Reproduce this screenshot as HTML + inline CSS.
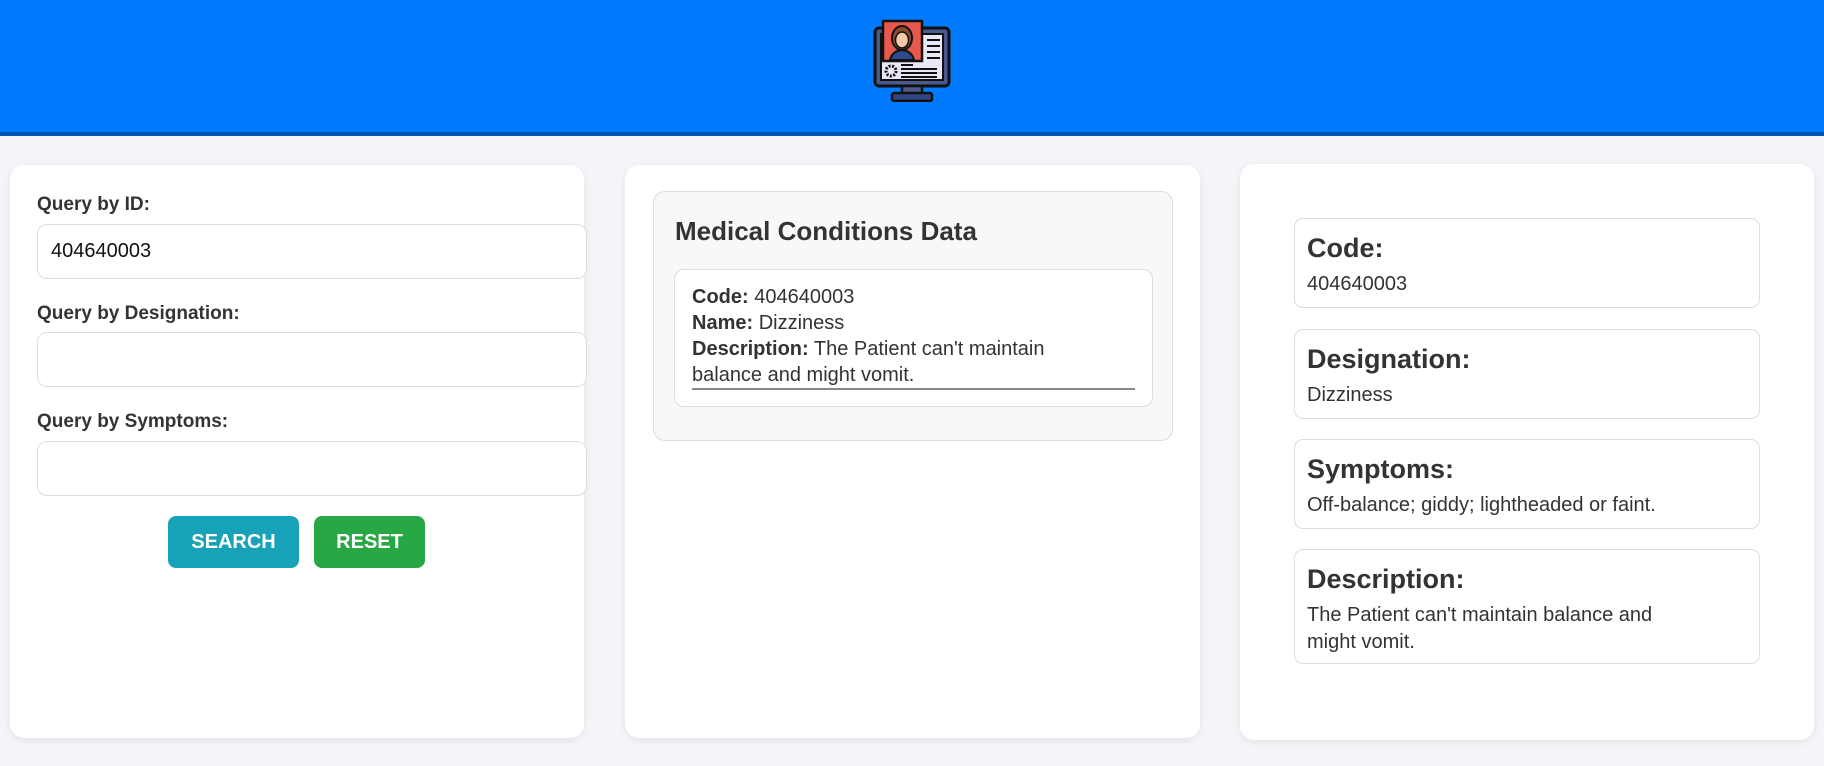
<!DOCTYPE html>
<html><head><meta charset="utf-8"><style>
*{box-sizing:border-box;margin:0;padding:0}
body{width:1824px;height:766px;background:#f4f5f8;font-family:"Liberation Sans",Arial,sans-serif;color:#333;position:relative;overflow:hidden}
.hdr{position:absolute;left:0;top:0;width:1824px;height:136px;background:#007bff;border-bottom:4px solid #0356b0}
.card{position:absolute;background:#fff;border-radius:14px;box-shadow:0 2px 8px rgba(0,0,0,.08);top:165px;height:573px}
.lbl{position:absolute;left:37px;font-weight:bold;font-size:19px;color:#333}
.inp{position:absolute;left:37px;width:550px;height:55px;border:1px solid #ddd;border-radius:10px;background:#fff;font-size:20px;color:#111;padding:15px 13px}
.btn{position:absolute;top:516px;height:52px;border-radius:8px;color:#fff;font-weight:bold;font-size:20px;text-align:center;line-height:52px}
.box{position:absolute;left:54px;width:466px;border:1px solid #ddd;border-radius:9px;padding:12px 12px}
.box h3{font-size:27px;font-weight:bold;color:#333;line-height:34px}
.box p{font-size:20px;line-height:27px;margin-top:6px;color:#333}
</style></head><body>
<div class="hdr">
<svg style="position:absolute;left:872px;top:18px" width="82" height="84" viewBox="0 0 82 84">
<rect x="3" y="10" width="74" height="58" rx="4" fill="#4a5a8a" stroke="#111" stroke-width="3"/>
<rect x="9" y="16" width="62" height="46" fill="#e8e8f6" stroke="#111" stroke-width="2"/>
<rect x="30" y="68" width="20" height="8" fill="#4a5a8a" stroke="#111" stroke-width="2.5"/>
<rect x="20" y="75" width="40" height="8" rx="2" fill="#2f4680" stroke="#111" stroke-width="2.5"/>
<rect x="11" y="3" width="39" height="40" fill="#e8584f" stroke="#111" stroke-width="2.5"/>
<path d="M18 42 q2-9 12-10 q10 1 12 10z" fill="#2e4a8a" stroke="#111" stroke-width="2"/>
<ellipse cx="30" cy="20" rx="10" ry="12" fill="#8a4b2e" stroke="#111" stroke-width="2"/>
<ellipse cx="30" cy="22" rx="6.5" ry="8" fill="#f8c9a8" stroke="#111" stroke-width="1.5"/>
<path d="M55 22h13M55 28h13M55 34h13M55 40h13" stroke="#111" stroke-width="2"/>
<circle cx="19" cy="53" r="5" fill="none" stroke="#111" stroke-width="3" stroke-dasharray="2 1.5"/>
<path d="M29 47h12M29 51h36M29 55h36M29 59h36" stroke="#111" stroke-width="2"/>
</svg>
</div>
<div class="card" style="left:10px;width:574px"></div>
<div class="lbl" style="top:194px">Query by ID:</div>
<div class="inp" style="top:224px">404640003</div>
<div class="lbl" style="top:303px">Query by Designation:</div>
<div class="inp" style="top:332px"></div>
<div class="lbl" style="top:411px">Query by Symptoms:</div>
<div class="inp" style="top:441px"></div>
<div class="btn" style="left:168px;width:131px;background:#17a2b8">SEARCH</div>
<div class="btn" style="left:314px;width:111px;background:#28a745">RESET</div>

<div class="card" style="left:625px;width:575px">
<div style="position:absolute;left:28px;top:26px;width:520px;height:250px;background:#f8f8f8;border:1px solid #ddd;border-radius:12px">
<div style="position:absolute;left:21px;top:24px;font-size:26px;font-weight:bold;color:#333">Medical Conditions Data</div>
<div style="position:absolute;left:20px;top:77px;width:479px;height:138px;background:#fff;border:1px solid #ddd;border-radius:10px;padding:14px 17px;font-size:20px;line-height:26px">
<div style="border-bottom:2px solid #888"><b>Code:</b> 404640003<br><b>Name:</b> Dizziness<br><b>Description:</b> The Patient can't maintain<br>balance and might vomit.</div>
</div></div></div>

<div class="card" style="left:1240px;width:574px;top:164px;height:576px">
<div class="box" style="top:54px;height:90px"><h3>Code:</h3><p>404640003</p></div>
<div class="box" style="top:165px;height:90px"><h3>Designation:</h3><p>Dizziness</p></div>
<div class="box" style="top:275px;height:90px"><h3>Symptoms:</h3><p>Off-balance; giddy; lightheaded or faint.</p></div>
<div class="box" style="top:385px;height:115px"><h3>Description:</h3><p>The Patient can't maintain balance and<br>might vomit.</p></div>
</div>
</body></html>
